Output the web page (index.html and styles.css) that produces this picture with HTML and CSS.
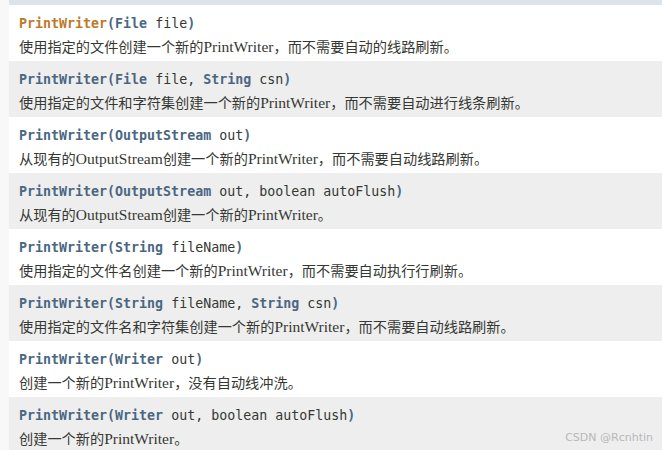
FILE: index.html
```html
<!DOCTYPE html>
<html>
<head>
<meta charset="utf-8">
<link rel="stylesheet" href="styles.css">
</head>
<body>
<div class="page">
  <div class="side"></div>
  <div class="main">
    <div class="topbar"></div>
    <div class="row white">
      <div class="sig"><span class="name hover">PrintWriter</span><span class="p">(</span><span class="t">File</span> <span class="a">file</span><span class="p">)</span></div>
      <div class="desc">使用指定的文件创建一个新的<span class="en">PrintWriter</span>，而不需要自动的线路刷新。</div>
    </div>
    <div class="row grey">
      <div class="sig"><span class="name">PrintWriter</span><span class="p">(</span><span class="t">File</span> <span class="a">file</span>, <span class="t">String</span> <span class="a">csn</span><span class="p">)</span></div>
      <div class="desc">使用指定的文件和字符集创建一个新的<span class="en">PrintWriter</span>，而不需要自动进行线条刷新。</div>
    </div>
    <div class="row white">
      <div class="sig"><span class="name">PrintWriter</span><span class="p">(</span><span class="t">OutputStream</span> <span class="a">out</span><span class="p">)</span></div>
      <div class="desc">从现有的<span class="en">OutputStream</span>创建一个新的<span class="en">PrintWriter</span>，而不需要自动线路刷新。</div>
    </div>
    <div class="row grey">
      <div class="sig"><span class="name">PrintWriter</span><span class="p">(</span><span class="t">OutputStream</span> <span class="a">out, boolean autoFlush</span><span class="p">)</span></div>
      <div class="desc">从现有的<span class="en">OutputStream</span>创建一个新的<span class="en">PrintWriter</span>。</div>
    </div>
    <div class="row white">
      <div class="sig"><span class="name">PrintWriter</span><span class="p">(</span><span class="t">String</span> <span class="a">fileName</span><span class="p">)</span></div>
      <div class="desc">使用指定的文件名创建一个新的<span class="en">PrintWriter</span>，而不需要自动执行行刷新。</div>
    </div>
    <div class="row grey">
      <div class="sig"><span class="name">PrintWriter</span><span class="p">(</span><span class="t">String</span> <span class="a">fileName</span>, <span class="t">String</span> <span class="a">csn</span><span class="p">)</span></div>
      <div class="desc">使用指定的文件名和字符集创建一个新的<span class="en">PrintWriter</span>，而不需要自动线路刷新。</div>
    </div>
    <div class="row white">
      <div class="sig"><span class="name">PrintWriter</span><span class="p">(</span><span class="t">Writer</span> <span class="a">out</span><span class="p">)</span></div>
      <div class="desc">创建一个新的<span class="en">PrintWriter</span>，没有自动线冲洗。</div>
    </div>
    <div class="row grey">
      <div class="sig"><span class="name">PrintWriter</span><span class="p">(</span><span class="t">Writer</span> <span class="a">out, boolean autoFlush</span><span class="p">)</span></div>
      <div class="desc">创建一个新的<span class="en">PrintWriter</span>。</div>
    </div>
  </div>
</div>
<div class="watermark">CSDN @Rcnhtin</div>
</body>
</html>
```

FILE: styles.css
```css
html, body {
  margin: 0;
  padding: 0;
  background: #ffffff;
  overflow: hidden;
}
.page {
  display: flex;
  width: 662px;
  height: 450px;
  overflow: hidden;
}
.side {
  width: 9px;
  flex: 0 0 9px;
  background: #f8f8f8;
}
.main {
  flex: 1;
  display: flex;
  flex-direction: column;
}
.topbar {
  height: 5px;
  flex: 0 0 5px;
  background: #dee3e9;
}
.row {
  flex: 0 0 56px;
  height: 56px;
  box-sizing: border-box;
  padding: 9px 0 0 10px;
}
.white { background: #ffffff; }
.grey { background: #eeeeee; }
.sig {
  font-family: "DejaVu Sans Mono", monospace;
  font-size: 13.3px;
  line-height: 20px;
  color: #353833;
  white-space: pre;
}
.name, .t, .p {
  font-weight: bold;
  color: #4a6782;
}
.name.hover { color: #bb7a2a; }
.a { color: #353833; font-weight: normal; }
.desc {
  font-family: "Noto Sans CJK SC", sans-serif;
  font-size: 14.2px;
  line-height: 24px;
  color: #353833;
  white-space: nowrap;
}
.en {
  font-family: "Liberation Serif", serif;
  font-size: 15.5px;
}
.watermark {
  position: absolute;
  right: 9px;
  bottom: 6px;
  font-family: "DejaVu Sans", sans-serif;
  font-size: 11px;
  color: #b8b8b8;
}
```
